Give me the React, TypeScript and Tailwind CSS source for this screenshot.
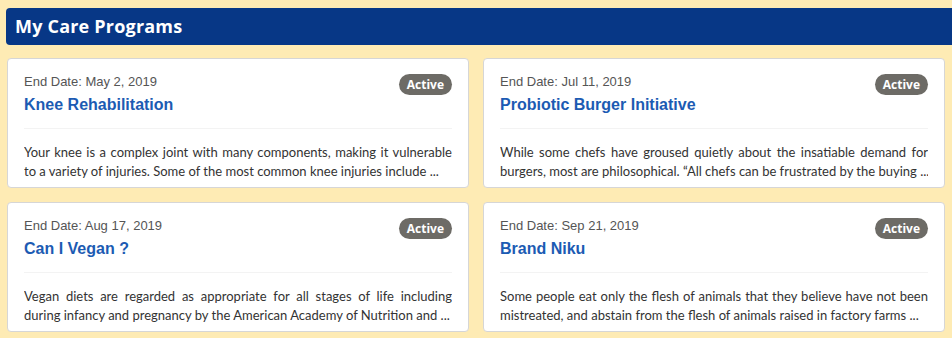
const programs = [
  {
    endDate: 'May 2, 2019',
    title: 'Knee Rehabilitation',
    body: [
      'Your knee is a complex joint with many components, making it vulnerable',
      'to a variety of injuries. Some of the most common knee injuries include ...',
    ],
  },
  {
    endDate: 'Jul 11, 2019',
    title: 'Probiotic Burger Initiative',
    body: [
      'While some chefs have groused quietly about the insatiable demand for',
      'burgers, most are philosophical. “All chefs can be frustrated by the buying ...',
    ],
  },
  {
    endDate: 'Aug 17, 2019',
    title: 'Can I Vegan ?',
    body: [
      'Vegan diets are regarded as appropriate for all stages of life including',
      'during infancy and pregnancy by the American Academy of Nutrition and ...',
    ],
  },
  {
    endDate: 'Sep 21, 2019',
    title: 'Brand Niku',
    body: [
      'Some people eat only the flesh of animals that they believe have not been',
      'mistreated, and abstain from the flesh of animals raised in factory farms ...',
    ],
  },
]

function ProgramCard({ endDate, title, body }: { endDate: string; title: string; body: string[] }) {
  return (
    <div className="rounded-[4px] border border-[#d6d6d6] bg-white px-4 pt-[15px]">
      <div className="flex items-start justify-between">
        <div>
          <div className="text-[13px] leading-[16px] text-[#555]" style={{ fontFamily: '"Liberation Sans", Arial, sans-serif' }}>
            End Date: {endDate}
          </div>
          <div className="mt-[5px] text-[16px] font-bold leading-[20px] text-[#1c5bb3]" style={{ fontFamily: '"Liberation Sans", Arial, sans-serif' }}>
            {title}
          </div>
        </div>
        <span className="rounded-full bg-[#6d6b66] px-[8px] py-[3px] text-[12px] font-bold leading-[15px] text-white" style={{ fontFamily: '"Open Sans", sans-serif' }}>
          Active
        </span>
      </div>
      <div className="mt-[13px] border-t border-[#f3f3f3]" />
      <div
        className="mt-[14px] mb-[9px] h-[35px] overflow-hidden text-[13px] leading-[19px] text-[#333]"
        style={{ fontFamily: 'Lato, sans-serif' }}
      >
        <div className="text-justify [text-align-last:justify]">{body[0]}</div>
        <div className="overflow-hidden whitespace-nowrap">{body[1]}</div>
      </div>
    </div>
  )
}

export default function App() {
  return (
    <div className="min-h-[338px] bg-[#feebb4] pt-2">
      <div className="ml-[6px] flex h-[37px] items-center rounded-l-[4px] bg-[#073786] pl-[9px]">
        <h1 className="text-[18px] font-bold tracking-[0.2px] text-white" style={{ fontFamily: '"Open Sans", sans-serif' }}>
          My Care Programs
        </h1>
      </div>
      <div className="grid grid-cols-2 gap-[14px] px-[7px] pt-[13px]">
        {programs.map(p => (
          <ProgramCard key={p.title} {...p} />
        ))}
      </div>
    </div>
  )
}
